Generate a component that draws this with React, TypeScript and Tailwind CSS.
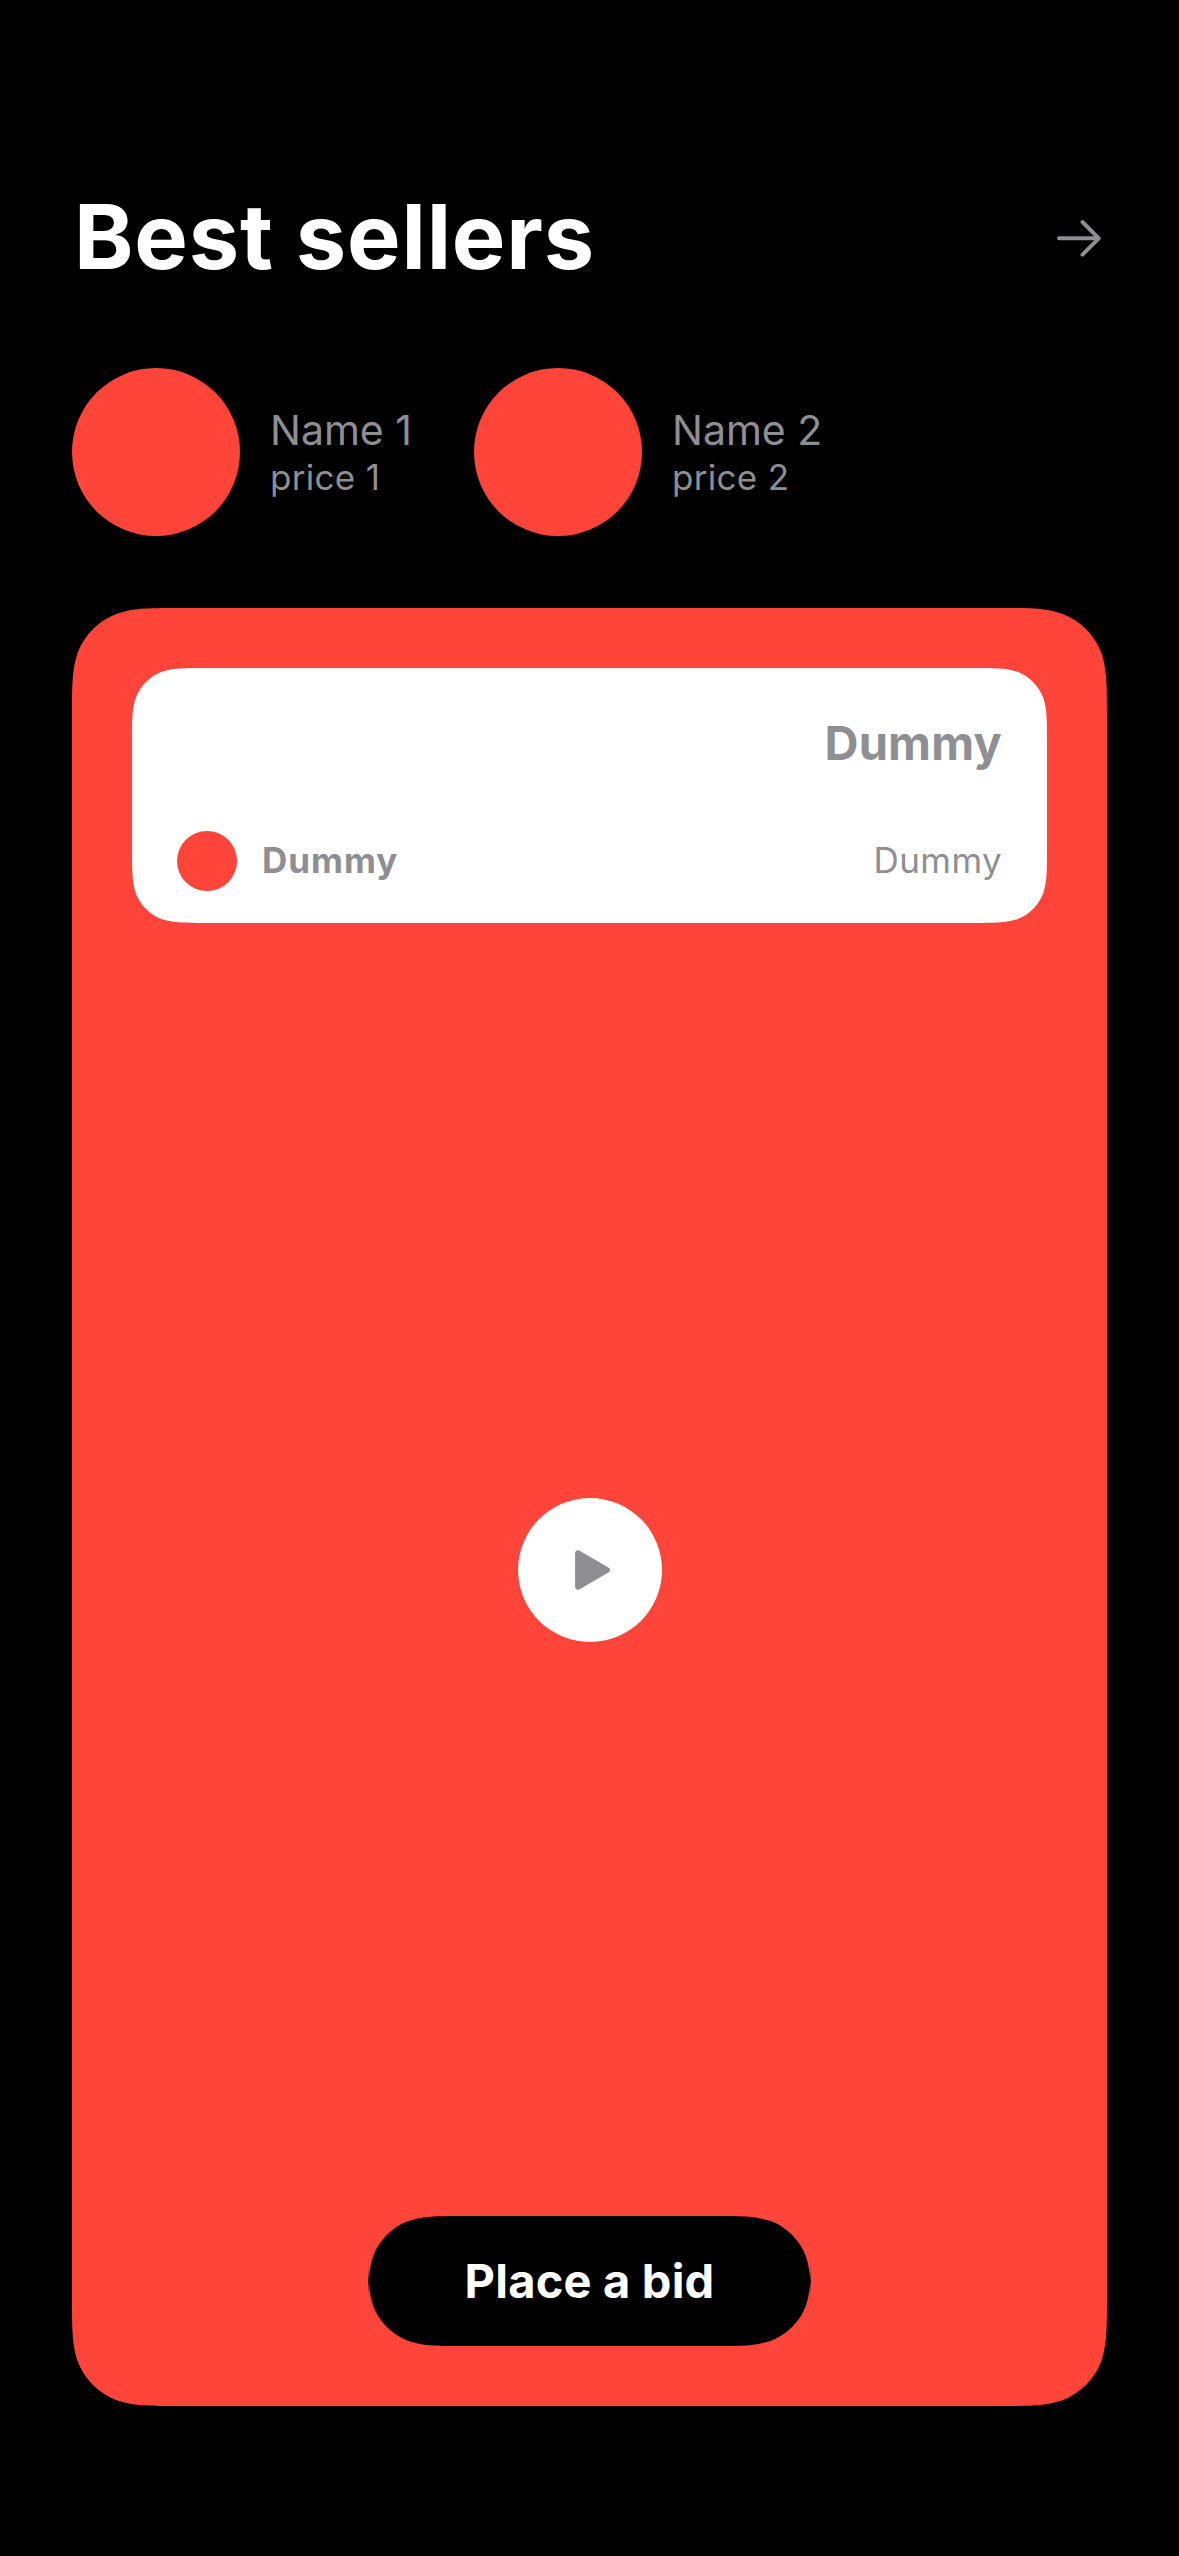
import type { ReactNode } from 'react';

/** Corner outline for a unit radius, from the horizontal edge to the vertical edge. */
const CORNER = [
  [1.52866, 0],
  [1.08849, 0], [0.86841, 0], [0.66993, 0.0655],
  [0.63149, 0.07491],
  [0.37282, 0.16906], [0.16906, 0.37282], [0.07491, 0.63149],
  [0, 0.86841], [0, 1.08849], [0, 1.52866],
];

/** Builds a rounded-rectangle path whose corners ease continuously into the edges. */
function smoothRect(w: number, h: number, r: number) {
  const corner = (right: boolean, bottom: boolean) => {
    const p = CORNER.map(([x, y]) => {
      const px = right ? w - x * r : x * r;
      const py = bottom ? h - y * r : y * r;
      return `${px.toFixed(2)} ${py.toFixed(2)}`;
    });
    if (right !== bottom) {
      return `L${p[0]} C${p[1]} ${p[2]} ${p[3]} L${p[4]} C${p[5]} ${p[6]} ${p[7]} C${p[8]} ${p[9]} ${p[10]}`;
    }
    return `L${p[10]} C${p[9]} ${p[8]} ${p[7]} C${p[6]} ${p[5]} ${p[4]} L${p[3]} C${p[2]} ${p[1]} ${p[0]}`;
  };
  const path = corner(true, false) + corner(true, true) + corner(false, true) + corner(false, false);
  return `path("${path.replace('L', 'M')}Z")`;
}

type SmoothProps = { w: number; h: number; r: number; className: string; children: ReactNode };

function Smooth({ w, h, r, className, children }: SmoothProps) {
  return (
    <div className={className} style={{ width: w, height: h, clipPath: smoothRect(w, h, r) }}>
      {children}
    </div>
  );
}

function Seller({ name, price }: { name: string; price: string }) {
  return (
    <div className="flex items-center gap-[30px]">
      <div className="size-[168px] shrink-0 rounded-full bg-[#ff453a]" />
      <div className="w-36 whitespace-nowrap">
        <p className="text-[41px] leading-[51px]">{name}</p>
        <p className="text-[35px] leading-[43px] tracking-[0.3px]">{price}</p>
      </div>
    </div>
  );
}

export default function App() {
  return (
    <main className="flex h-[2556px] w-[1179px] flex-col bg-black px-[72px] pt-[177px] font-['Inter',sans-serif] text-[#8e8e93]">
      <header className="flex h-[118px] items-center justify-between">
        <h1 className="ml-0.5 pt-0.5 text-[90px] leading-[118px] font-bold tracking-[0.8px] text-white">Best sellers</h1>
        <svg className="size-[54px]" viewBox="0 0 54 54" fill="none" stroke="currentColor" strokeWidth="4" strokeLinecap="round" strokeLinejoin="round">
          <path d="M6 29.3H45.5M29.5 13L45.8 29.3L29.5 45.6" />
        </svg>
      </header>

      <section className="mt-[73px] flex gap-[60px]">
        <Seller name="Name 1" price="price 1" />
        <Seller name="Name 2" price="price 2" />
      </section>

      <div className="mt-[72px]">
        <Smooth w={1035} h={1798} r={72} className="flex flex-col items-center justify-between bg-[#ff453a] p-[60px]">
          <Smooth w={915} h={255} r={48} className="flex flex-col justify-between bg-white px-[45px] pt-[46px] pb-8">
            <p className="text-right text-[47px] leading-[57px] font-bold tracking-[0.2px]">Dummy</p>
            <div className="flex items-center">
              <div className="size-[60px] rounded-full bg-[#ff453a]" />
              <p className="ml-[25px] pb-0.5 text-[35px] leading-[43px] font-bold tracking-[1px]">Dummy</p>
              <p className="ml-auto pb-0.5 text-[35px] leading-[43px] tracking-[0.4px]">Dummy</p>
            </div>
          </Smooth>

          <button aria-label="Play" className="flex size-36 items-center justify-center rounded-full bg-white">
            <svg className="size-12" viewBox="0 0 48 48" fill="currentColor" stroke="currentColor" strokeWidth="6" strokeLinejoin="round">
              <path d="M12.1 7.3L40.9 24L12.1 40.7Z" />
            </svg>
          </button>

          <Smooth w={443} h={130} r={65} className="flex items-center justify-center bg-black">
            <span className="pb-0.5 text-[47px] leading-[57px] font-bold tracking-[0.2px] text-white">Place a bid</span>
          </Smooth>
        </Smooth>
      </div>
    </main>
  );
}
